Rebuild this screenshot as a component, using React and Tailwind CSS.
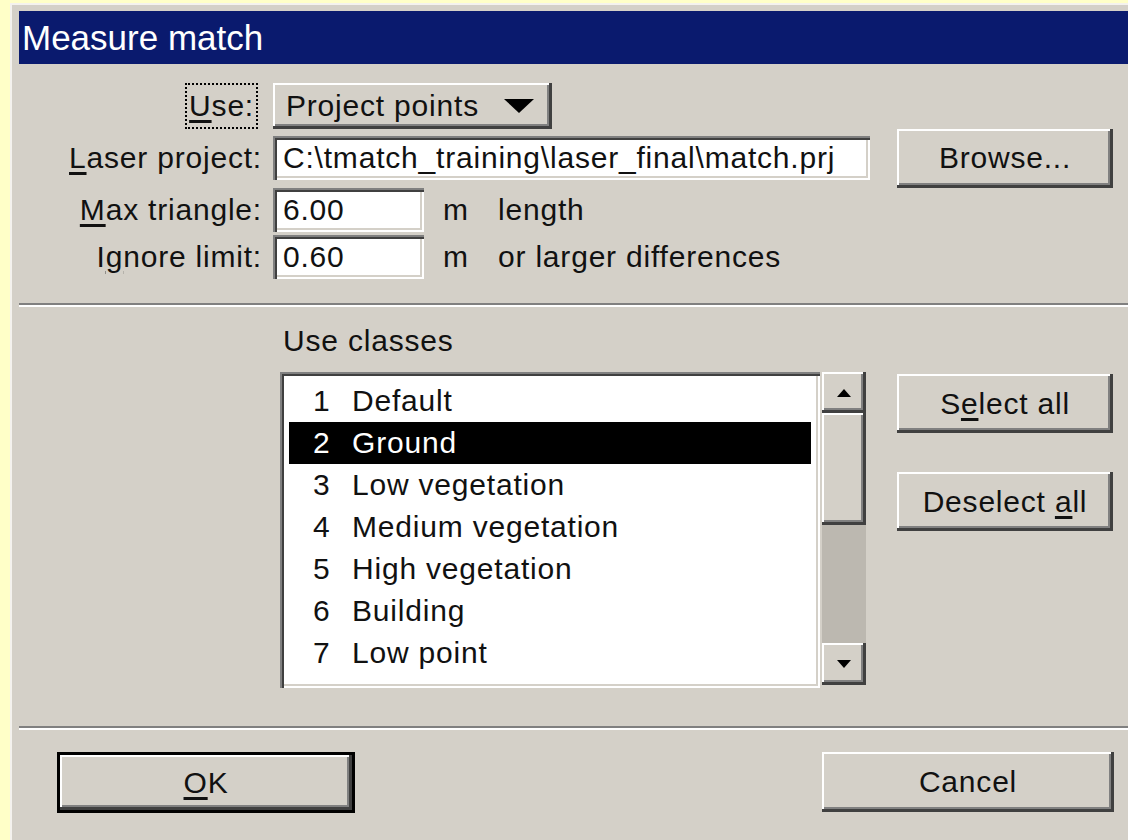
import React, { useState } from "react";

const raised =
  "bg-[#d4d0c8] shadow-[inset_-3px_-3px_0_#404040,inset_2px_2px_0_#ffffff,inset_-5px_-5px_0_#808080]";
const sunken =
  "bg-white shadow-[inset_2px_2px_0_#808080,inset_4px_4px_0_#404040,inset_-2px_-2px_0_#ffffff,inset_-4px_-4px_0_#d4d0c8]";

const classes = [
  { id: 1, name: "Default" },
  { id: 2, name: "Ground" },
  { id: 3, name: "Low vegetation" },
  { id: 4, name: "Medium vegetation" },
  { id: 5, name: "High vegetation" },
  { id: 6, name: "Building" },
  { id: 7, name: "Low point" },
];

function Label({ children, className = "" }) {
  return (
    <div className={"flex w-[254px] justify-end pr-[11px] " + className}>
      {children}
    </div>
  );
}

function Field({ value, width }) {
  return (
    <div className={"flex h-[44px] items-center pl-[10px] " + sunken + " " + width}>
      {value}
    </div>
  );
}

function Divider({ className = "" }) {
  return (
    <div
      className={
        "h-0 border-y-2 border-t-[#808080] border-b-white " + className
      }
    />
  );
}

function Arrow({ up }) {
  return (
    <svg width="14" height="8" viewBox="0 0 14 8">
      {up ? (
        <polygon points="7,0 14,8 0,8" fill="#000" />
      ) : (
        <polygon points="0,0 14,0 7,8" fill="#000" />
      )}
    </svg>
  );
}

export default function App() {
  const [selected, setSelected] = useState(2);

  return (
    <div className="min-h-screen overflow-hidden bg-[#ffffc8] pl-[10px] pt-[3px] font-['Liberation_Sans',sans-serif] text-[30px] leading-none tracking-[0.8px] text-[#111]">
      <div className="h-[837px] border-l-2 border-t-2 border-[#f4f2ee] bg-[#d4d0c8] pl-[7px] pt-[6px]">
        {/* caption */}
        <div className="flex h-[53px] items-center bg-[#0a1a6e] pl-[3px] text-[35px] tracking-normal text-white">
          Measure match
        </div>

        {/* source settings */}
        <div className="mt-[19px] flex h-[46px] items-center">
          <Label className="pr-[15px]">
            <span className="border-2 border-dotted border-black px-[2px] py-[6px]">
              <span className="underline underline-offset-4">U</span>se:
            </span>
          </Label>
          <button
            className={
              "flex h-[46px] w-[279px] items-center justify-between pl-[13px] pr-[18px] " +
              raised
            }
          >
            Project points
            <svg width="30" height="14" viewBox="0 0 30 14">
              <polygon points="0,0 30,0 15,14" fill="#000" />
            </svg>
          </button>
        </div>

        <div className="mt-[7px] flex h-[44px] items-center">
          <Label>
            <span>
              <span className="underline underline-offset-4">L</span>aser project:
            </span>
          </Label>
          <Field width="w-[597px]" value="C:\tmatch_training\laser_final\match.prj" />
          <button
            className={"-my-[8px] ml-[27px] h-[59px] w-[216px] " + raised}
          >
            Browse...
          </button>
        </div>

        <div className="mt-[8px] flex h-[44px] items-center">
          <Label>
            <span>
              <span className="underline underline-offset-4">M</span>ax triangle:
            </span>
          </Label>
          <Field width="w-[151px]" value="6.00" />
          <span className="ml-[19px] w-[55px]">m</span>
          <span>length</span>
        </div>

        <div className="mt-[3px] flex h-[44px] items-center">
          <Label>
            <span>
              I<span className="underline underline-offset-4">g</span>nore limit:
            </span>
          </Label>
          <Field width="w-[151px]" value="0.60" />
          <span className="ml-[19px] w-[55px]">m</span>
          <span>or larger differences</span>
        </div>

        <Divider className="mt-[24px]" />

        {/* class selection */}
        <div className="mt-[19px] flex h-[30px] items-center pl-[264px]">
          Use classes
        </div>

        <div className="mt-[16px] flex pl-[261px]">
          <div className={"h-[316px] w-[540px] px-[9px] pt-[8px] " + sunken}>
            {classes.map((c) => (
              <div
                key={c.id}
                onClick={() => setSelected(c.id)}
                className={
                  "flex h-[42px] items-center pl-[24px] " +
                  (selected === c.id ? "bg-black text-white" : "")
                }
              >
                <span className="w-[39px]">{c.id}</span>
                <span>{c.name}</span>
              </div>
            ))}
          </div>

          <div className="ml-[2px] flex h-[313px] w-[44px] flex-col">
            <div className={"flex h-[41px] items-center justify-center " + raised}>
              <Arrow up />
            </div>
            <div className={"h-[112px] " + raised} />
            <div className="flex-1 bg-[#bcb8b0]" />
            <div className={"flex h-[42px] items-center justify-center " + raised}>
              <Arrow />
            </div>
          </div>

          <div className="ml-[31px] mt-[2px] flex w-[216px] flex-col gap-[39px]">
            <button className={"h-[59px] " + raised}>
              S<span className="underline underline-offset-4">e</span>lect all
            </button>
            <button className={"h-[59px] " + raised}>
              Deselect <span className="underline underline-offset-4">a</span>ll
            </button>
          </div>
        </div>

        <Divider className="mt-[38px]" />

        {/* dialog buttons */}
        <div className="mt-[22px] flex">
          <button
            className={
              "ml-[38px] h-[61px] w-[298px] border-[3px] border-black " + raised
            }
          >
            <span className="underline underline-offset-4">O</span>K
          </button>
          <button className={"ml-[467px] h-[60px] w-[292px] " + raised}>
            Cancel
          </button>
        </div>
      </div>
    </div>
  );
}
